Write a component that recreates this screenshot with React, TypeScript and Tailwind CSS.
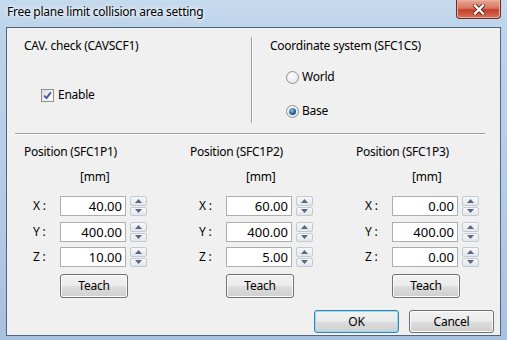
import React from 'react';

function Spinner() {
    return (
        <div className="flex h-[20px] w-[17px] flex-col gap-px">
            <div className="flex flex-1 items-center justify-center rounded-[2px] border border-[#c3cad4] bg-[linear-gradient(180deg,#f8f8f8,#e3e6ea)]">
                <svg width="7" height="4" viewBox="0 0 7 4">
                    <path d="M0 4 L3.5 0 L7 4 Z" fill="#56678a" />
                </svg>
            </div>
            <div className="flex flex-1 items-center justify-center rounded-[2px] border border-[#c3cad4] bg-[linear-gradient(180deg,#f8f8f8,#e3e6ea)]">
                <svg width="7" height="4" viewBox="0 0 7 4">
                    <path d="M0 0 L3.5 4 L7 0 Z" fill="#56678a" />
                </svg>
            </div>
        </div>
    );
}

function WinButton({ label, width, height, isDefault }: { label: string; width: string; height: string; isDefault?: boolean }) {
    return (
        <div
            className={`${width} ${height} flex shrink-0 items-center justify-center rounded-[3px] border bg-[linear-gradient(180deg,#f2f2f2_0%,#ebebeb_48%,#dddddd_52%,#cfcfcf_100%)] text-black ${
                isDefault
                    ? 'border-[#3c7fb1] shadow-[inset_0_0_0_1px_#8fdcf8]'
                    : 'border-[#707070] shadow-[inset_0_0_0_1px_#fbfbfb]'
            }`}
        >
            {label}
        </div>
    );
}

function AxisRow({ axis, value, className }: { axis: string; value: string; className: string }) {
    return (
        <div className={`flex h-[20px] items-center ${className}`}>
            <span className="w-[36px] pl-[9px]">{axis} :</span>
            <div className="h-[20px] w-[66px] border border-[#abadb3] bg-white pr-[3px] text-right text-[13px] leading-[18px] tracking-normal">
                {value}
            </div>
            <div className="ml-[4px]">
                <Spinner />
            </div>
        </div>
    );
}

function PositionColumn({ name, x, y, z }: { name: string; x: string; y: string; z: string }) {
    return (
        <div className="flex w-[166px] shrink-0 flex-col">
            <div className="h-[16px] leading-[16px]">Position ({name})</div>
            <div className="mt-[9px] h-[16px] pl-[56px] leading-[16px]">[mm]</div>
            <AxisRow axis="X" value={x} className="mt-[11px]" />
            <AxisRow axis="Y" value={y} className="mt-[6px]" />
            <AxisRow axis="Z" value={z} className="mt-[5px]" />
            <div className="mt-[7px] pl-[36px]">
                <WinButton label="Teach" width="w-[68px]" height="h-[24px]" />
            </div>
        </div>
    );
}

function Radio({ checked }: { checked?: boolean }) {
    return (
        <div className="flex h-[13px] w-[13px] items-center justify-center rounded-full border border-[#8e8f8f] bg-[radial-gradient(circle_at_40%_35%,#ffffff,#e0e0e0)]">
            {checked && (
                <div className="h-[7px] w-[7px] rounded-full bg-[radial-gradient(circle_at_40%_35%,#8cc6ee,#1d5a92_60%,#0d3a6a)]" />
            )}
        </div>
    );
}

export default function App() {
    return (
        <div className="relative h-[340px] w-[507px] overflow-hidden bg-[linear-gradient(180deg,#c6daee_0%,#bcd3ea_10%,#b3cce6_60%,#a7c1de_100%)] font-['Noto_Sans',sans-serif] text-[12px] tracking-[-0.25px] text-black">
            {/* Title bar */}
            <div className="flex h-[27px] items-start justify-between">
                <div className="pl-[7px] pt-[4px] text-[12px] leading-[16px] [text-shadow:0_0_6px_#ffffff,0_0_3px_#ffffff]">
                    Free plane limit collision area setting
                </div>
                <div className="mr-[6px] flex h-[19px] w-[45px] items-center justify-center rounded-b-[4px] border border-t-0 border-[#6e2a20] bg-[linear-gradient(180deg,#e9a897_0%,#d8775f_45%,#c2412a_55%,#d9705b_100%)] shadow-[inset_0_0_0_1px_#eab0a4]">
                    <svg width="12" height="11" viewBox="0 0 12 11">
                        <path d="M2 1.5 L10 9.5 M10 1.5 L2 9.5" stroke="#5a1a12" strokeWidth="4" strokeLinecap="square" />
                        <path d="M2 1.5 L10 9.5 M10 1.5 L2 9.5" stroke="#ffffff" strokeWidth="2.4" strokeLinecap="square" />
                    </svg>
                </div>
            </div>

            {/* Client area */}
            <div className="ml-[6px] flex h-[309px] w-[495px] flex-col border border-[#4f6580] bg-[#f0f0f0]">
                {/* Top section */}
                <div className="flex h-[105px]">
                    <div className="flex w-[244px] flex-col pl-[17px] pt-[10px]">
                        <div className="h-[16px] leading-[16px]">CAV. check (CAVSCF1)</div>
                        <div className="mt-[33px] flex h-[16px] items-center pl-[17px]">
                            <div className="flex h-[13px] w-[13px] items-center justify-center border border-[#8e8f8f] bg-[linear-gradient(135deg,#dcdcdc,#ffffff)]">
                                <svg width="9" height="9" viewBox="0 0 9 9">
                                    <path d="M1.2 4.6 L3.5 7 L7.8 1.4" fill="none" stroke="#3f579a" strokeWidth="1.8" />
                                </svg>
                            </div>
                            <span className="ml-[4px]">Enable</span>
                        </div>
                    </div>
                    <div className="mt-[9px] h-[86px] w-[2px] border-l border-[#a0a0a0] bg-white" />
                    <div className="flex flex-col pl-[17px] pt-[10px]">
                        <div className="h-[16px] leading-[16px]">Coordinate system (SFC1CS)</div>
                        <div className="mt-[15px] flex h-[16px] items-center pl-[16px]">
                            <Radio />
                            <span className="ml-[3px]">World</span>
                        </div>
                        <div className="mt-[18px] flex h-[16px] items-center pl-[16px]">
                            <Radio checked />
                            <span className="ml-[3px]">Base</span>
                        </div>
                    </div>
                </div>

                <div className="ml-[8px] h-[2px] w-[470px] border-t border-[#a0a0a0] bg-white" />

                {/* Positions */}
                <div className="mt-[9px] flex pl-[17px]">
                    <PositionColumn name="SFC1P1" x="40.00" y="400.00" z="10.00" />
                    <PositionColumn name="SFC1P2" x="60.00" y="400.00" z="5.00" />
                    <PositionColumn name="SFC1P3" x="0.00" y="400.00" z="0.00" />
                </div>

                {/* Dialog buttons */}
                <div className="mt-[12px] flex justify-end gap-[10px] pr-[6px]">
                    <WinButton label="OK" width="w-[85px]" height="h-[23px]" isDefault />
                    <WinButton label="Cancel" width="w-[85px]" height="h-[23px]" />
                </div>
            </div>
        </div>
    );
}
